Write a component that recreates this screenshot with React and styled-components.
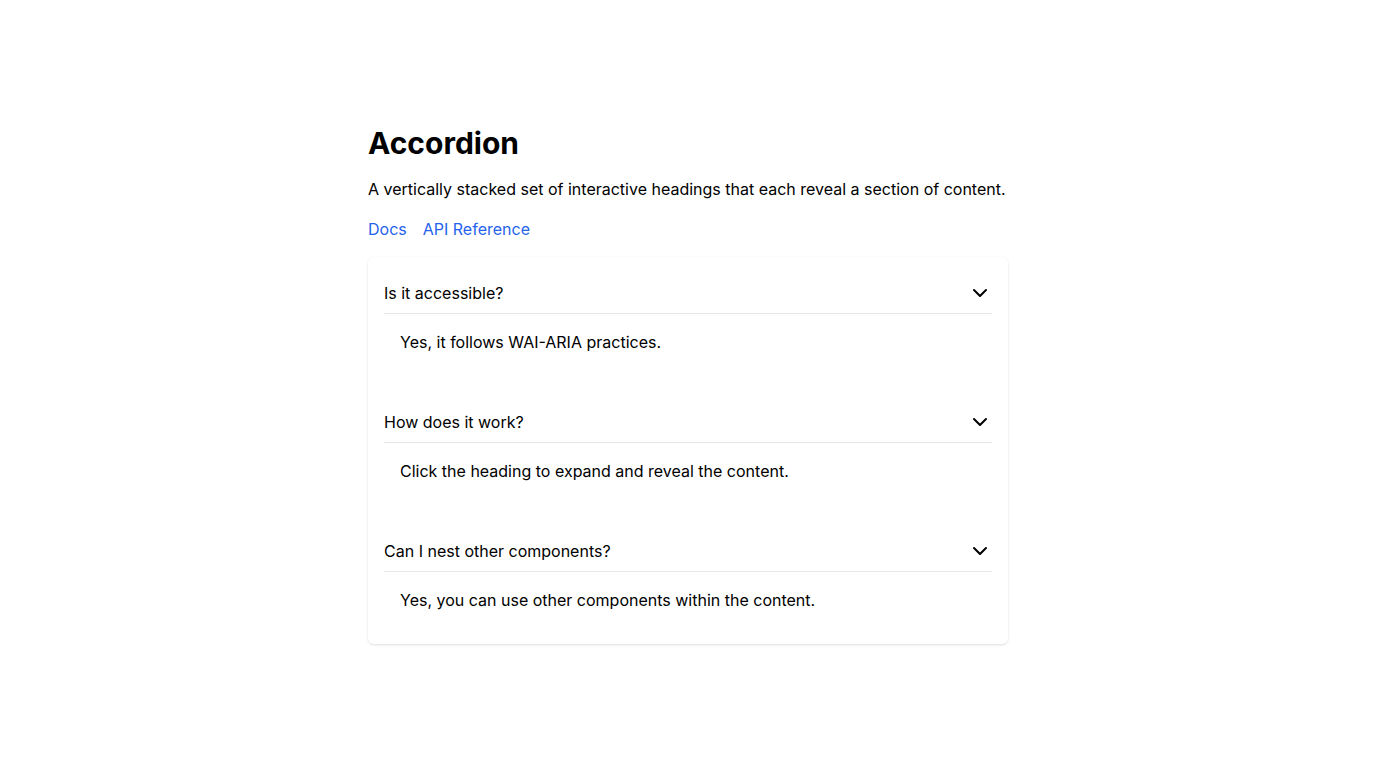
import React, { useState } from "react";
import styled, { createGlobalStyle } from "styled-components";
import { ChevronDown } from "lucide-react";

const GlobalStyle = createGlobalStyle`
  *, *::before, *::after {
    box-sizing: border-box;
  }
  body {
    margin: 0;
    background: #ffffff;
    color: #000000;
    font-family: Inter, "Liberation Sans", sans-serif;
    font-size: 16px;
    line-height: 24px;
  }
`;

const Page = styled.main`
  min-height: 100vh;
  display: flex;
  align-items: center;
  justify-content: center;
`;

const Content = styled.div`
  width: 100%;
  max-width: 640px;
  display: flex;
  flex-direction: column;
  gap: 16px;
`;

const Title = styled.h1`
  margin: 0;
  font-size: 30px;
  line-height: 36px;
  font-weight: 700;
`;

const Description = styled.p`
  margin: 0;
`;

const Links = styled.nav`
  display: flex;
  gap: 16px;
`;

const DocLink = styled.a`
  color: #2563eb;
  text-decoration: none;

  &:hover {
    text-decoration: underline;
  }
`;

const Card = styled.section`
  display: flex;
  flex-direction: column;
  gap: 32px;
  padding: 16px;
  border-radius: 6px;
  background: #ffffff;
  box-shadow: 0 1px 3px 0 rgba(0, 0, 0, 0.1), 0 1px 2px -1px rgba(0, 0, 0, 0.1);
`;

const Heading = styled.h2`
  margin: 0;
  font-size: 16px;
  font-weight: 400;
`;

const Trigger = styled.button`
  width: 100%;
  display: flex;
  align-items: center;
  justify-content: space-between;
  padding: 8px 0;
  border: 0;
  border-bottom: 1px solid #e5e7eb;
  background: none;
  color: inherit;
  font: inherit;
  line-height: 24px;
  text-align: left;
  cursor: pointer;
`;

const Panel = styled.div`
  padding: 16px;
`;

const items = [
  { title: "Is it accessible?", body: "Yes, it follows WAI-ARIA practices." },
  { title: "How does it work?", body: "Click the heading to expand and reveal the content." },
  { title: "Can I nest other components?", body: "Yes, you can use other components within the content." },
];

function AccordionItem({ id, title, children }) {
  const [open, setOpen] = useState(true);
  return (
    <div>
      <Heading>
        <Trigger
          type="button"
          id={`${id}-trigger`}
          aria-expanded={open}
          aria-controls={`${id}-panel`}
          onClick={() => setOpen(!open)}
        >
          {title}
          <ChevronDown size={24} aria-hidden="true" />
        </Trigger>
      </Heading>
      <Panel id={`${id}-panel`} role="region" aria-labelledby={`${id}-trigger`} hidden={!open}>
        {children}
      </Panel>
    </div>
  );
}

export default function App() {
  return (
    <>
      <GlobalStyle />
      <Page>
        <Content>
          <Title>Accordion</Title>
          <Description>
            A vertically stacked set of interactive headings that each reveal a section of content.
          </Description>
          <Links>
            <DocLink href="#docs">Docs</DocLink>
            <DocLink href="#api">API Reference</DocLink>
          </Links>
          <Card>
            {items.map((item, index) => (
              <AccordionItem key={item.title} id={`item-${index}`} title={item.title}>
                {item.body}
              </AccordionItem>
            ))}
          </Card>
        </Content>
      </Page>
    </>
  );
}
